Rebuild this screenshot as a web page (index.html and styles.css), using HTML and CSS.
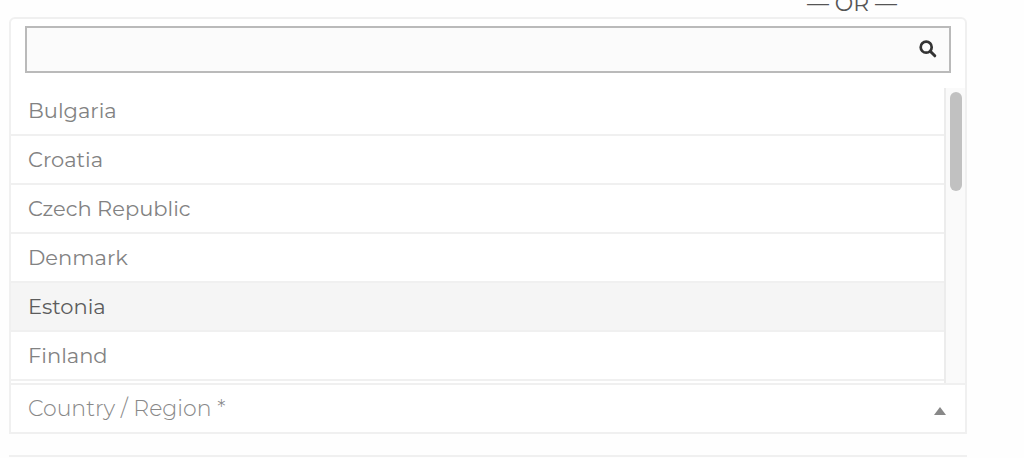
FILE: index.html
```html
<!DOCTYPE html>
<html lang="en">
<head>
<meta charset="utf-8">
<meta name="viewport" content="width=device-width, initial-scale=1">
<title>Country / Region</title>
<link rel="stylesheet" href="styles.css">
</head>
<body>
<main class="form">
  <p class="divider">— OR —</p>
  <section class="picker">
    <div class="search">
      <input class="search-input" type="text" aria-label="Search countries">
      <svg class="search-icon" viewBox="0 0 18 18" aria-hidden="true">
        <circle cx="7.2" cy="7.2" r="5.5" fill="none" stroke="#333" stroke-width="2.7"/>
        <path d="M11.5 11.5L15.8 15.8" stroke="#333" stroke-width="3" stroke-linecap="round"/>
      </svg>
    </div>
    <div class="results">
      <ul class="options" role="listbox" aria-label="Countries">
        <li class="option" role="option">Bulgaria</li>
        <li class="option" role="option">Croatia</li>
        <li class="option" role="option">Czech Republic</li>
        <li class="option" role="option">Denmark</li>
        <li class="option option-active" role="option" aria-selected="true">Estonia</li>
        <li class="option" role="option">Finland</li>
      </ul>
      <div class="track"><div class="thumb"></div></div>
    </div>
    <button class="toggle" type="button" aria-expanded="true">
      <span>Country / Region *</span>
      <svg class="arrow" viewBox="0 0 12 8" aria-hidden="true"><path d="M6 0L12 8H0Z" fill="#888"/></svg>
    </button>
  </section>
  <div class="next-field"></div>
</main>
</body>
</html>
```
FILE: styles.css
```css
* {
  box-sizing: border-box;
}

body {
  margin: 0;
  overflow: hidden;
  background: #fefefe;
  color: #828282;
  font-family: Montserrat, Inter, "Open Sans", sans-serif;
  font-size: 21px;
  line-height: 24px;
}

.form {
  margin: -8px 57px 0 9px;
}

.divider {
  margin: 0;
  padding-right: 70px;
  text-align: right;
  color: #555;
  font-size: 22px;
}

.picker {
  margin-top: 1px;
  border: 2px solid #f0f0f0;
  border-radius: 6px 6px 0 0;
  background: #fff;
}

.search {
  position: relative;
  margin: 7px 14px 14px;
}

.search-input {
  display: block;
  width: 100%;
  height: 47px;
  padding: 0 48px 0 12px;
  border: 2px solid #bababa;
  border-radius: 0;
  background: #fbfbfb;
  color: #333;
  font: inherit;
  outline: none;
}

.search-icon {
  position: absolute;
  top: 14px;
  right: 14px;
  width: 18px;
  height: 18px;
}

.results {
  display: flex;
  height: 296px;
}

.options {
  flex: 1;
  margin: 0;
  padding: 0;
  list-style: none;
}

.option {
  height: 49px;
  padding: 12px 17px;
  border-bottom: 2px solid #f0f0f0;
}

.option-active {
  background: #f5f5f5;
  color: #5c5c5c;
}

.track {
  width: 21px;
  margin-top: 1px;
  padding: 4px;
  border-left: 2px solid #ececec;
  background: #fafafa;
}

.thumb {
  width: 12px;
  height: 99px;
  border-radius: 6px;
  background: #c1c1c1;
}

.toggle {
  display: flex;
  align-items: center;
  justify-content: space-between;
  width: 100%;
  height: 49px;
  padding: 0 19px 0 17px;
  border: 0;
  border-top: 2px solid #f0f0f0;
  background: #fff;
  color: #888;
  font: inherit;
  font-weight: 300;
  font-size: 22px;
}

.arrow {
  width: 12px;
  height: 8px;
  margin-top: 4px;
}

.next-field {
  margin-top: 21px;
  border-top: 2px solid #f0f0f0;
}
```
